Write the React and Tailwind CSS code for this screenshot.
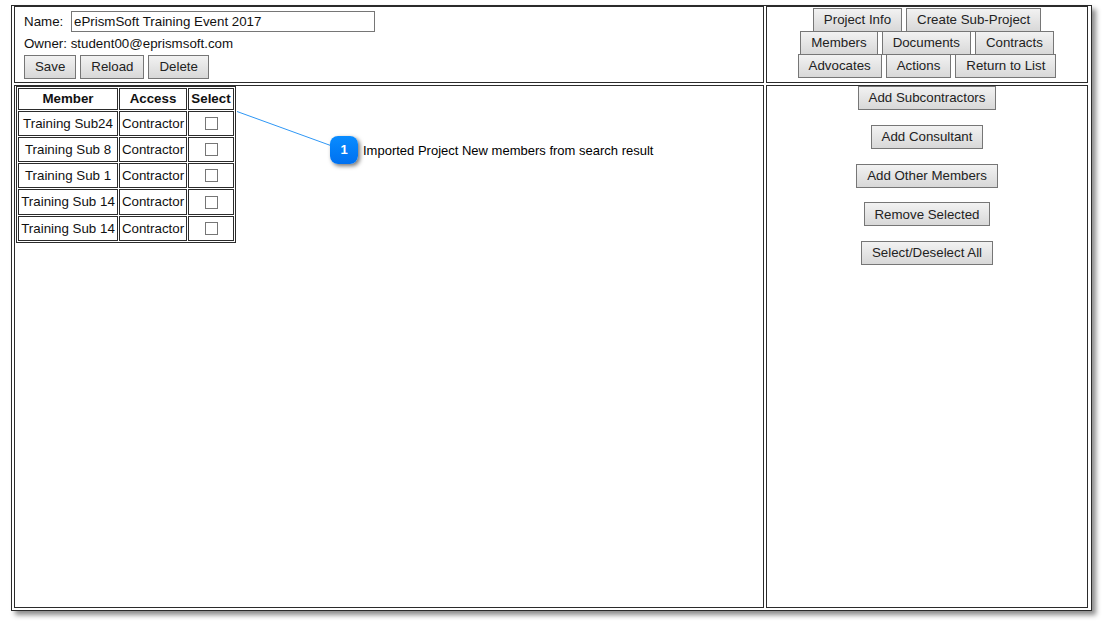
const btn =
  "h-6 shrink-0 border border-[#767676] bg-gradient-to-b from-[#f2f2f2] to-[#d8d8d8] px-[10px] text-[13.3px] leading-none text-[#222]";

function Btn({ children }) {
  return <button className={btn}>{children}</button>;
}

const members = [
  ["Training Sub24", "h-[25px]"],
  ["Training Sub 8", "h-[25px]"],
  ["Training Sub 1", "h-[25px]"],
  ["Training Sub 14", "h-[26px]"],
  ["Training Sub 14", "h-[25px]"],
];

export default function App() {
  return (
    <div className="relative h-[622px] w-[1102px] overflow-hidden bg-white font-['Liberation_Sans',Arial,sans-serif] text-[13.33px] text-[#111]">
      <div className="ml-[11px] mt-[5px] grid h-[606px] w-[1081px] grid-cols-[750px_322px] grid-rows-[77px_523px] gap-[2px] border border-[#2b2b2b] pb-[2px] pl-[2px] pr-[3px] shadow-[4px_4px_5px_rgba(0,0,0,0.45)]">
        {/* project form */}
        <div className="border border-[#2b2b2b] pl-[9px] pt-1">
          <div className="flex items-center">
            <span className="w-[47px]">Name:</span>
            <input
              readOnly
              value="ePrismSoft Training Event 2017"
              className="h-[21px] w-[304px] border border-[#767676] px-[2px] text-[13.33px] text-[#111] outline-none"
            />
          </div>
          <div className="mt-[2px] h-5 leading-5">Owner: student00@eprismsoft.com</div>
          <div className="mt-[1px] flex gap-1">
            <Btn>Save</Btn>
            <Btn>Reload</Btn>
            <Btn>Delete</Btn>
          </div>
        </div>

        {/* nav buttons */}
        <div className="flex flex-col items-center border border-[#2b2b2b] pt-[1px]">
          <div className="flex h-[23px] gap-1">
            <Btn>Project Info</Btn>
            <Btn>Create Sub-Project</Btn>
          </div>
          <div className="flex h-[23px] gap-1">
            <Btn>Members</Btn>
            <Btn>Documents</Btn>
            <Btn>Contracts</Btn>
          </div>
          <div className="flex h-[23px] gap-1">
            <Btn>Advocates</Btn>
            <Btn>Actions</Btn>
            <Btn>Return to List</Btn>
          </div>
        </div>

        {/* members table */}
        <div className="border border-[#2b2b2b] pl-[1px]">
          <table className="border-separate border-spacing-[1px] border border-[#2b2b2b] text-center">
            <thead>
              <tr className="h-[22px] font-bold">
                <th className="w-[100px] border border-[#2b2b2b] p-0">Member</th>
                <th className="w-[68px] border border-[#2b2b2b] p-0">Access</th>
                <th className="w-[46px] border border-[#2b2b2b] p-0">Select</th>
              </tr>
            </thead>
            <tbody>
              {members.map(([name, h], i) => (
                <tr key={i} className={h}>
                  <td className="border border-[#2b2b2b] p-0">{name}</td>
                  <td className="border border-[#2b2b2b] p-0">Contractor</td>
                  <td className="border border-[#2b2b2b] p-0">
                    <span className="mx-auto block h-[13px] w-[13px] border border-[#767676] bg-white" />
                  </td>
                </tr>
              ))}
            </tbody>
          </table>
        </div>

        {/* member actions */}
        <div className="flex flex-col items-center gap-[14.75px] border border-[#2b2b2b]">
          <Btn>Add Subcontractors</Btn>
          <Btn>Add Consultant</Btn>
          <Btn>Add Other Members</Btn>
          <Btn>Remove Selected</Btn>
          <Btn>Select/Deselect All</Btn>
        </div>
      </div>

      {/* callout */}
      <svg className="absolute left-0 top-0" width="400" height="170">
        <line x1="237" y1="111.5" x2="332" y2="146" stroke="#2f97f5" strokeWidth="1" />
      </svg>
      <div className="absolute left-[330px] top-[136px] flex h-[28px] w-[28px] items-center justify-center rounded-lg bg-gradient-to-b from-[#0a8cff] to-[#0070f0] text-[13px] font-bold text-white shadow-[2px_2px_4px_rgba(0,0,0,0.55)]">
        1
      </div>
      <div className="absolute left-[363px] top-[143px] whitespace-nowrap text-[13px] leading-4 text-black">
        Imported Project New members from search result
      </div>
    </div>
  );
}
